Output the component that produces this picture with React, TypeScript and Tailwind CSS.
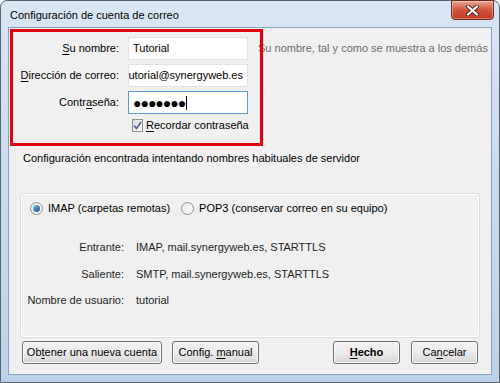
import React from 'react';

const font = { fontFamily: '"Liberation Sans", Arial, sans-serif' };

const Key: React.FC<{ children: React.ReactNode }> = ({ children }) => (
  <span className="underline underline-offset-2">{children}</span>
);

const Button: React.FC<{ children: React.ReactNode; className?: string; bold?: boolean }> = ({ children, className = '', bold }) => (
  <button
    className={`h-[23px] whitespace-nowrap rounded-[3px] border border-[#707070] bg-gradient-to-b from-[#f2f2f2] via-[#ebebeb] to-[#d6d6d6] text-[11px] text-black shadow-[inset_0_0_0_1px_#fcfcfc] ${bold ? 'font-bold' : ''} ${className}`}
  >
    {children}
  </button>
);

const Field: React.FC<{ value: string; focused?: boolean; password?: boolean }> = ({ value, focused, password }) => (
  <div
    className={`flex h-[23px] w-[120px] items-center overflow-hidden whitespace-nowrap border bg-white px-[4px] text-black ${
      focused ? 'border-[#5b9bd5]' : 'border-[#e2e3ea]'
    } ${value.length > 18 ? 'justify-end' : ''}`}
  >
    {password ? (
      <span className="flex items-center">
        <span className="text-[14px] leading-none tracking-[-1px]">●●●●●●●</span>
        <span className="ml-[1px] h-[14px] w-[1px] bg-black" />
      </span>
    ) : (
      <span className="shrink-0">{value}</span>
    )}
  </div>
);

const Radio: React.FC<{ checked?: boolean }> = ({ checked }) => (
  <span className="flex h-[13px] w-[13px] shrink-0 items-center justify-center rounded-full border border-[#8e8f8f] bg-gradient-to-br from-[#e6e6e6] to-[#ffffff]">
    {checked && <span className="h-[7px] w-[7px] rounded-full bg-gradient-to-br from-[#7bc1f3] to-[#10507e]" />}
  </span>
);

export default function App() {
  return (
    <div className="h-[383px] w-[500px] overflow-hidden bg-white" style={font}>
      <div className="flex h-full w-full flex-col rounded-t-[7px] border border-[#5a6470] bg-gradient-to-b from-[#d9e6f4] via-[#c8dbef] to-[#bcd2ea]">
        {/* Title bar */}
        <div className="relative flex h-[26px] shrink-0 items-center pl-[9px] pt-[3px]">
          <span className="text-[11px] text-black">Configuración de cuenta de correo</span>
          <div className="absolute right-[5px] top-[-1px] flex h-[20px] w-[43px] items-center justify-center rounded-b-[4px] border border-[#6b2a20] bg-gradient-to-b from-[#e8a493] via-[#d2543a] to-[#c23a1f] shadow-[inset_0_0_0_1px_rgba(255,255,255,0.35)]">
            <svg width="13" height="11" viewBox="0 0 13 11">
              <path d="M2 1.5 L11 9.5 M11 1.5 L2 9.5" stroke="#4a2a25" strokeWidth="4" strokeLinecap="round" />
              <path d="M2 1.5 L11 9.5 M11 1.5 L2 9.5" stroke="#ffffff" strokeWidth="2.2" strokeLinecap="round" />
            </svg>
          </div>
        </div>

        {/* Client area */}
        <div className="mx-[7px] mb-[7px] flex flex-1 flex-col border border-[#8aa2bf] bg-[#f0f0f0] text-[11px] leading-[15px] text-black">
          <div className="relative">
            <div className="grid grid-cols-[110px_120px_auto] items-center gap-x-[9px] gap-y-[4px] pt-[9px]">
              <span className="text-right">
                <Key>S</Key>u nombre:
              </span>
              <Field value="Tutorial" />
              <span className="ml-[1px] whitespace-nowrap text-[#6d6d6d]">Su nombre, tal y como se muestra a los demás</span>

              <span className="text-right">
                <Key>D</Key>irección de correo:
              </span>
              <Field value="tutorial@synergyweb.es" />
              <span />

              <span className="text-right">
                Contr<Key>a</Key>seña:
              </span>
              <Field value="" password focused />
              <span />

              <span />
              <div className="flex items-center gap-[3px] pl-[4px]">
                <span className="flex h-[13px] w-[13px] items-center justify-center border border-[#8e8f8f] bg-gradient-to-br from-[#dcdcdc] to-white">
                  <svg width="9" height="9" viewBox="0 0 9 9">
                    <path d="M1 4.5 L3.5 7.5 L8 1" stroke="#4a5f97" strokeWidth="1.6" fill="none" />
                  </svg>
                </span>
                <span className="whitespace-nowrap">
                  <Key>R</Key>ecordar contraseña
                </span>
              </div>
              <span />
            </div>
            {/* Red annotation frame */}
            <div className="pointer-events-none absolute left-[1px] top-[1px] h-[117px] w-[253px] border-[3px] border-[#e3000f]" />
          </div>

          <div className="mt-[18px] pl-[14px]">Configuración encontrada intentando nombres habituales de servidor</div>

          <div className="mx-[11px] mt-[27px] flex h-[145px] flex-col rounded-[3px] border border-[#d5dfe5] shadow-[inset_0_0_0_1px_#ffffff]">
            <div className="flex items-center pl-[9px] pt-[7px]">
              <Radio checked />
              <span className="ml-[5px]">IMAP (carpetas remotas)</span>
              <span className="ml-[11px]">
                <Radio />
              </span>
              <span className="ml-[5px]">POP3 (conservar correo en su equipo)</span>
            </div>
            <div className="mt-[24px] grid grid-cols-[103px_auto] gap-x-[12px] gap-y-[11.5px] text-[#1e1e1e]">
              <span className="whitespace-nowrap text-right">Entrante:</span>
              <span>IMAP, mail.synergyweb.es, STARTTLS</span>
              <span className="whitespace-nowrap text-right">Saliente:</span>
              <span>SMTP, mail.synergyweb.es, STARTTLS</span>
              <span className="whitespace-nowrap text-right">Nombre de usuario:</span>
              <span>tutorial</span>
            </div>
          </div>

          <div className="mt-auto flex items-center px-[13px] pb-[10px]">
            <Button className="w-[140px]">
              Ob<Key>t</Key>ener una nueva cuenta
            </Button>
            <Button className="ml-[10px] w-[87px]">
              Config. <Key>m</Key>anual
            </Button>
            <Button bold className="ml-auto w-[67px] border-[#3c7fb1] shadow-[inset_0_0_0_1px_#dff1fb]">
              <Key>H</Key>echo
            </Button>
            <Button className="ml-[11px] w-[67px]">
              Ca<Key>n</Key>celar
            </Button>
          </div>
        </div>
      </div>
    </div>
  );
}
